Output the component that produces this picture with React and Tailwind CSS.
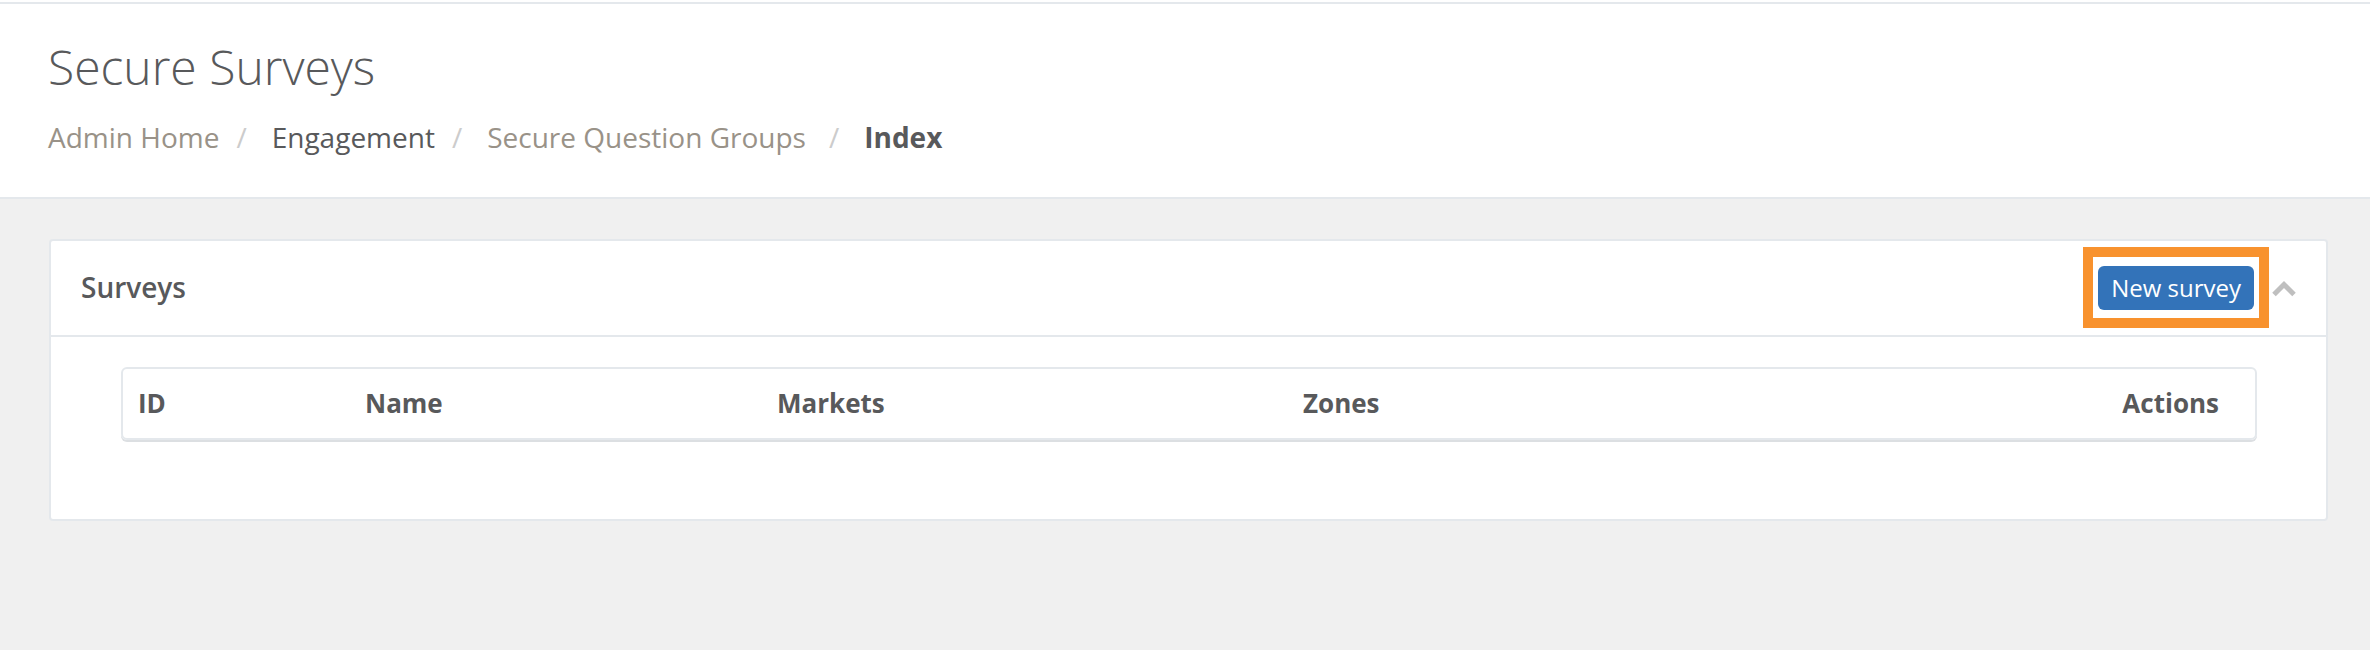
import React from 'react';

const crumbs = [
  { label: 'Admin Home', className: 'text-[#999288]', sep: 'ml-[17px] mr-[25px]' },
  { label: 'Engagement', className: 'text-[#58595b]', sep: 'ml-[17px] mr-[25px]' },
  { label: 'Secure Question Groups', className: 'text-[#999288]', sep: 'ml-[23px] mr-[25px]' },
];

const Separator = ({ className }) => (
  <span className={`text-[#cccccc] ${className}`}>/</span>
);

const ChevronUp = () => (
  <svg width="26" height="17" viewBox="0 0 26 17" className="block">
    <polyline points="3,14.5 13,4.5 23,14.5" fill="none" stroke="#bfbfbf" strokeWidth="5" strokeLinejoin="miter" />
  </svg>
);

export default function App() {
  return (
    <div className="min-h-[650px] bg-[#f0f0f0] font-['Open_Sans',sans-serif]">
      <div className="h-[2px] bg-white" />

      {/* page header */}
      <header className="bg-white border-t-2 border-b-2 border-[#e4e8ec] pl-[48px] pt-[35px] pb-[40px]">
        <h1 className="text-[48px] leading-[56px] font-light text-[#58595b]">Secure Surveys</h1>
        <nav className="mt-[22px] flex items-center text-[28px] leading-[40px]">
          {crumbs.map((c) => (
            <React.Fragment key={c.label}>
              <span className={c.className}>{c.label}</span>
              <Separator className={c.sep} />
            </React.Fragment>
          ))}
          <span className="font-bold text-[#58595b]">Index</span>
        </nav>
      </header>

      <main className="pt-[40px] pl-[49px] pr-[42px]">
        <section className="bg-white border-2 border-[#e4e8ec] rounded-[4px]">
          <div className="h-[96px] border-b-2 border-[#e4e8ec] flex items-center justify-between pl-[30px] pr-[29px]">
            <h2 className="text-[28px] leading-[40px] font-semibold text-[#58595b] pb-[2px]">Surveys</h2>
            <div className="flex items-center">
              <div className="relative">
                <button className="h-[44px] px-[13px] rounded-[6px] bg-[#3373b9] text-white text-[24px] leading-[44px]">
                  New survey
                </button>
                {/* annotation highlight */}
                <div className="absolute -left-[15px] -right-[15px] -top-[19px] -bottom-[18px] border-[10px] border-[#f8922e] pointer-events-none" />
              </div>
              <div className="ml-[17px]">
                <ChevronUp />
              </div>
            </div>
          </div>

          <div className="pt-[30px] pl-[70px] pr-[69px] pb-[79px]">
            <div className="border-2 border-[#e4e8ec] rounded-[6px] shadow-[0_2px_0_#dcdfe2]">
              <div className="grid grid-cols-[227px_412px_526px_1fr] text-[26px] leading-[36px] font-bold text-[#58595b] pt-[16px] pb-[17px]">
                <div className="pl-[15px]">ID</div>
                <div className="pl-[15px]">Name</div>
                <div className="pl-[15px]">Markets</div>
                <div className="pl-[15px] flex justify-between pr-[36px]">
                  <span>Zones</span>
                  <span>Actions</span>
                </div>
              </div>
            </div>
          </div>
        </section>
      </main>
    </div>
  );
}
